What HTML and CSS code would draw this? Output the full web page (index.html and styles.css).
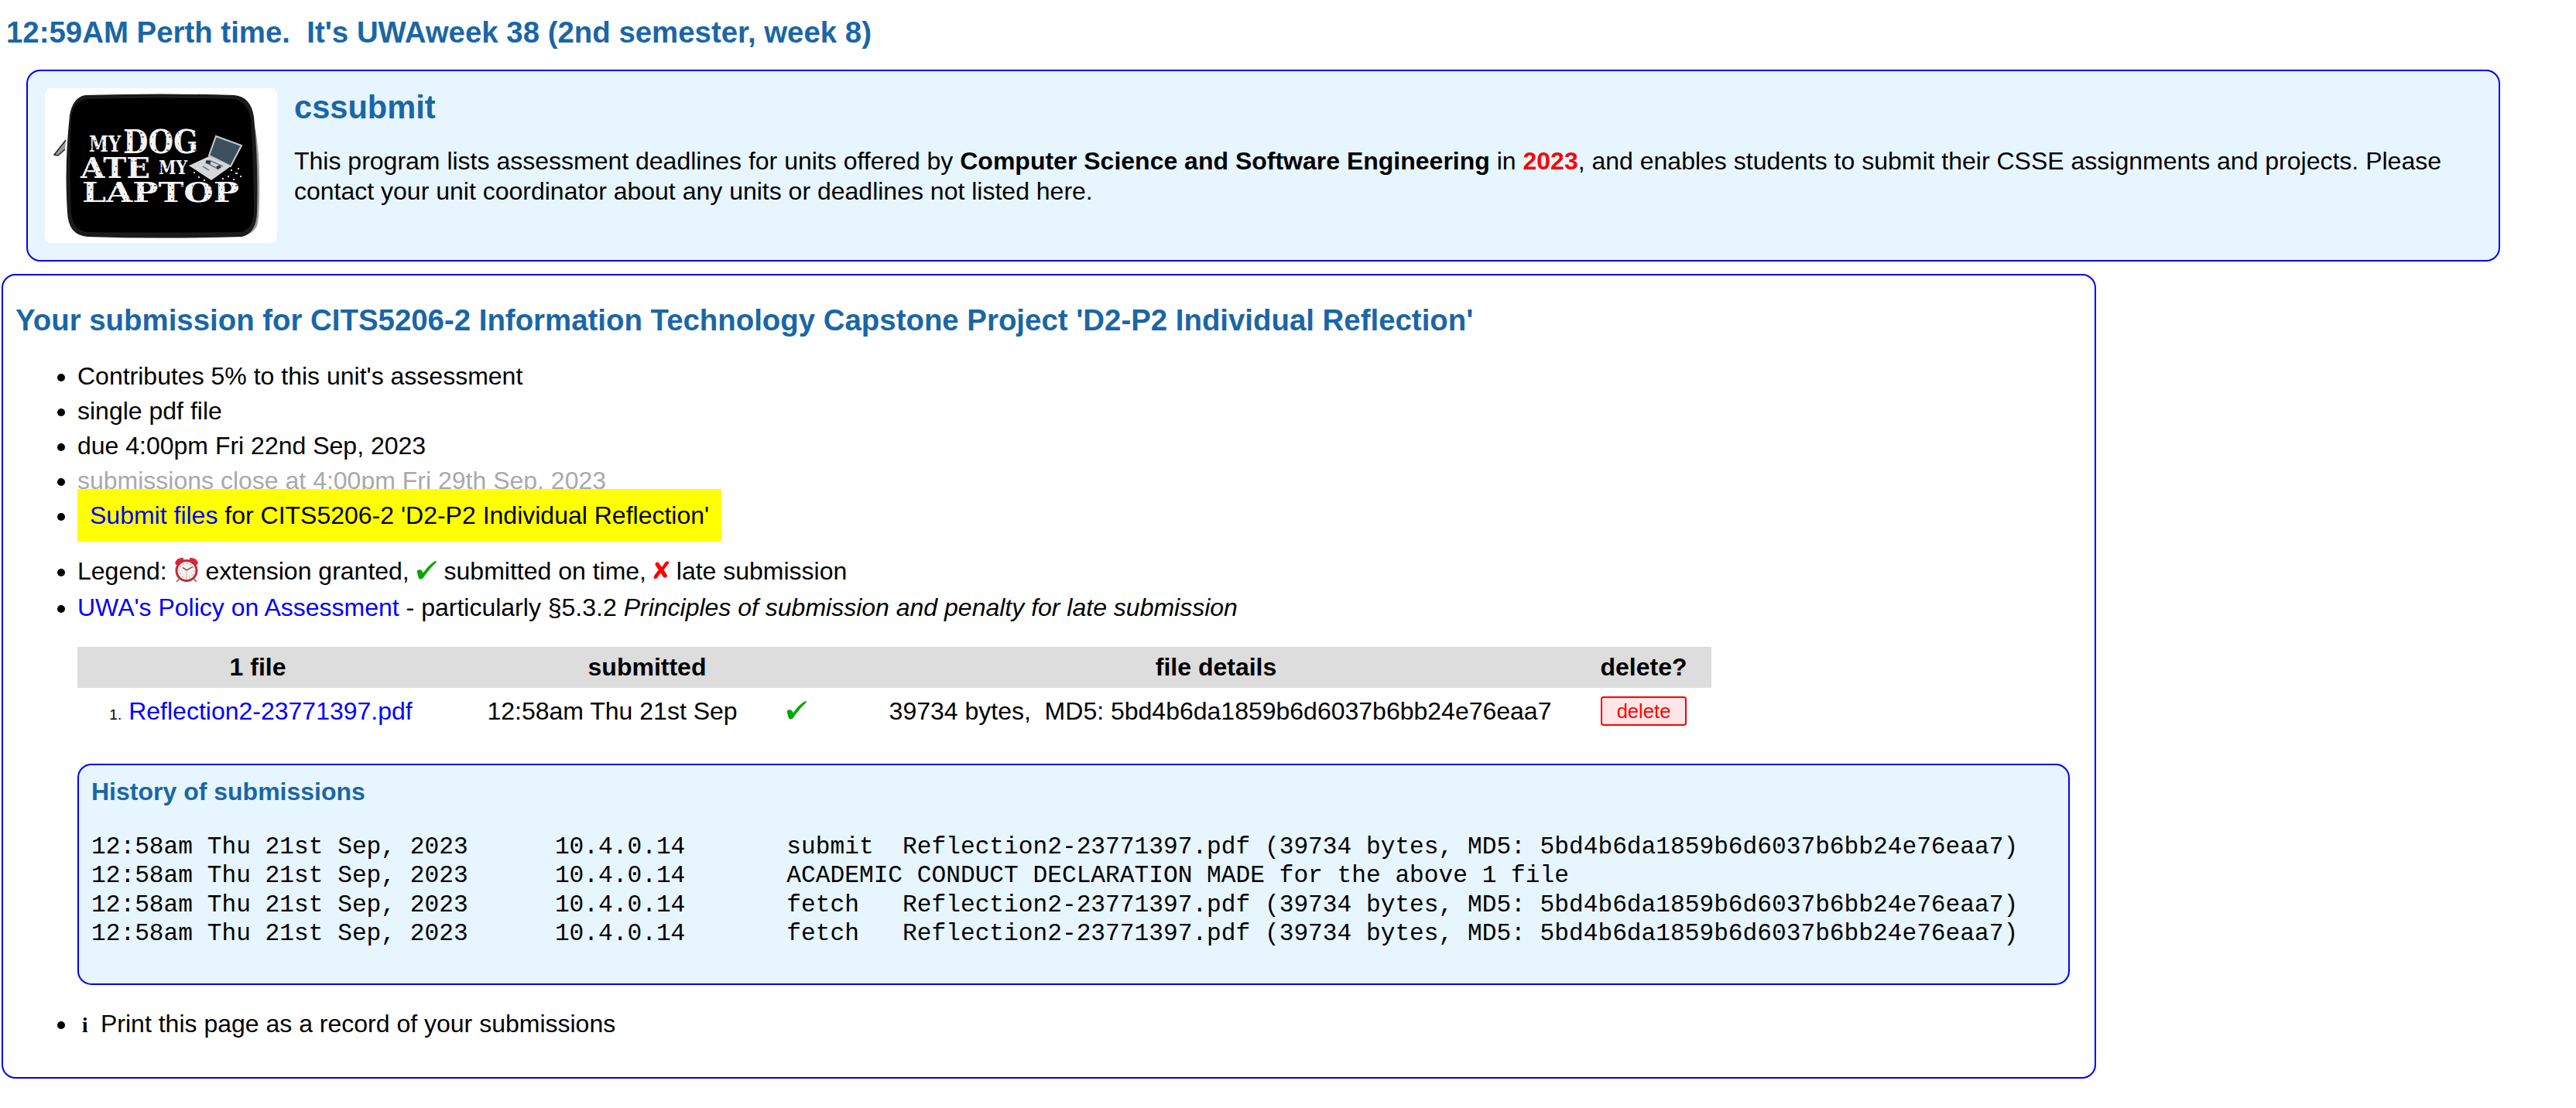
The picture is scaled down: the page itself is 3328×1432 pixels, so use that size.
FILE: index.html
```html
<!DOCTYPE html>
<html lang="en">
<head>
<meta charset="utf-8">
<title>cssubmit</title>
<link rel="stylesheet" href="styles.css">
</head>
<body>
<svg class="defs" width="0" height="0" aria-hidden="true">
  <symbol id="tick" viewBox="0 0 27 24"><path d="M0.5 13.5 C1.5 11 5 10.5 7 12.5 C8 13.6 8.3 14.6 8.8 15.6 C13 9.5 18.5 3.5 23.5 0.6 Q26 -0.2 26 1.6 C20 7 13 15.5 9 21.5 C7.5 23.8 4 24 3 22.2 C2.2 20 1.5 16.5 0.5 13.5Z" fill="#00a800"/></symbol>
</svg>
<h2 class="clock-line">12:59AM Perth time.&nbsp; It's UWAweek 38 (2nd semester, week 8)</h2>

<header class="banner">
  <svg class="logo" viewBox="0 0 300 200" role="img" aria-label="My dog ate my laptop">
    <rect width="300" height="200" rx="8" fill="#fff"/>
    <path d="M27 67 L12 86 L17 87 L26 79" fill="#999" stroke="#222" stroke-width="1.5"/>
    <path d="M266 30 Q276 60 277 110 Q278 165 274 178 Q268 190 250 192Z" fill="#999"/>
    <path d="M52 9 Q150 6 245 9 Q266 11 270 37 Q276 100 274 160 Q273 188 254 192 Q150 195 55 192 Q30 190 29 160 Q25 100 32 35 Q36 12 52 9Z" fill="#1b1b1b"/>
    <path d="M54 14 Q150 11 244 14 Q261 16 266 40 Q270 100 270 160 Q268 184 252 186 Q150 187 57 186 Q36 185 34 160 Q31 100 34 38 Q37 17 54 14Z" fill="#000"/>
    <g class="logo-text">
      <text x="57" y="82" font-size="27" textLength="41" lengthAdjust="spacingAndGlyphs">MY</text>
      <text x="101" y="84" font-size="43" textLength="97" lengthAdjust="spacingAndGlyphs">DOG</text>
      <text x="46" y="116" font-size="37" textLength="90" lengthAdjust="spacingAndGlyphs">ATE</text>
      <text x="147" y="111" font-size="24" textLength="37" lengthAdjust="spacingAndGlyphs">MY</text>
      <text x="48" y="147" font-size="36" textLength="203" lengthAdjust="spacingAndGlyphs">LAPTOP</text>
    </g>
    <g fill="none" stroke="#000" stroke-width="1" stroke-dasharray="1 5 2 9 1 3 3 11">
      <path d="M58 68H98M60 76H98M102 58H198M104 63H196M102 72H198M101 80H198M60 94H136M50 101H134M48 108H136M150 103H184M50 126H250M53 131H249M50 137H250M52 143H246"/>
    </g>
    <path d="M221 62 L254 74 L240 101 L212 87Z" fill="#3e5060" stroke="#ccc" stroke-width="2"/>
    <path d="M212 88 L240 101 L215 119 L186 100Z" fill="#d5d7da"/>
    <path d="M212 93 L230 101 M208 96 L225 105 M204 101 L212 106" stroke="#777" stroke-width="1.5"/>
    <path d="M222 103 l5 -2 M208 95 l6 1" stroke="#24384a" stroke-width="4"/>
    <path d="M240 106h2M246 110h3M236 114h2M243 118h2M249 104h2M229 117h2M252 114h2M192 109h2M198 115h2M205 119h2" stroke="#ddd" stroke-width="2"/>
  </svg>
  <div class="intro">
    <h1 class="app-name">cssubmit</h1>
    <p class="blurb">This program lists assessment deadlines for units offered by <b>Computer Science and Software Engineering</b> in <b class="year">2023</b>, and enables students to submit their CSSE assignments and projects. Please contact your unit coordinator about any units or deadlines not listed here.</p>
  </div>
</header>

<main class="panel">
  <h2 class="panel-title">Your submission for CITS5206-2 Information Technology Capstone Project 'D2-P2 Individual Reflection'</h2>
  <ul class="facts">
    <li>Contributes 5% to this unit's assessment</li>
    <li>single pdf file</li>
    <li>due 4:00pm Fri 22nd Sep, 2023</li>
    <li><span class="closed">submissions close at 4:00pm Fri 29th Sep, 2023</span></li>
    <li><span class="submit"><a href="#">Submit files</a> for CITS5206-2 'D2-P2 Individual Reflection'</span></li>
  </ul>
  <ul class="notes">
    <li>Legend: <svg class="alarm" viewBox="0 0 32 34"><path d="M7 28 L3 32 M25 28 L29 32" stroke="#888" stroke-width="2"/><path d="M1 8 Q3 0 12 1 L12 5 L4 11Z M31 8 Q29 0 20 1 L20 5 L28 11Z" fill="#e02436"/><circle cx="16" cy="17.5" r="13" fill="#f6f2ee" stroke="#c22a38" stroke-width="3"/><path d="M11 13.5 L16 17 L24 12.5" fill="none" stroke="#444" stroke-width="1.4"/><path d="M16 17V27" stroke="#d9b98a" stroke-width="1"/><circle cx="16" cy="17.5" r="9.5" fill="none" stroke="#e08a8a" stroke-width="2" stroke-dasharray="1 3.97"/></svg> extension granted, <svg class="tick"><use href="#tick"/></svg> submitted on time, <svg class="cross" viewBox="0 0 21 24"><path d="M4 2 Q5 0.5 7 2.5 L11 8 L15.5 1.5 Q18 -0.5 20.5 1.5 Q20.5 3 18.5 5 L13.5 11.5 L18 18.5 Q18.5 20.5 16 21.5 Q14 22.5 12.5 20 L9.5 15.5 L5 22 Q3 24 0.8 22.5 Q0 21 1.5 18.5 L6.8 11.5 L2.5 5 Q2 3 4 2Z" fill="#f00"/></svg> late submission</li>
    <li><a href="#">UWA's Policy on Assessment</a> - particularly §5.3.2 <i>Principles of submission and penalty for late submission</i></li>
  </ul>
  <table class="files">
    <colgroup><col class="c-file"><col class="c-when"><col class="c-mark"><col class="c-detail"><col class="c-delete"></colgroup>
    <tr><th>1 file</th><th colspan="2">submitted</th><th>file details</th><th>delete?</th></tr>
    <tr><td class="file"><small>1.</small> <a href="#">Reflection2-23771397.pdf</a></td><td>12:58am Thu 21st Sep</td><td class="mark"><svg class="tick"><use href="#tick"/></svg></td><td class="detail">39734 bytes,&nbsp; MD5: 5bd4b6da1859b6d6037b6bb24e76eaa7</td><td><button class="delete">delete</button></td></tr>
  </table>
  <section class="history">
    <h3 class="history-title">History of submissions</h3>
<pre class="log">12:58am Thu 21st Sep, 2023      10.4.0.14       submit  Reflection2-23771397.pdf (39734 bytes, MD5: 5bd4b6da1859b6d6037b6bb24e76eaa7)
12:58am Thu 21st Sep, 2023      10.4.0.14       ACADEMIC CONDUCT DECLARATION MADE for the above 1 file
12:58am Thu 21st Sep, 2023      10.4.0.14       fetch   Reflection2-23771397.pdf (39734 bytes, MD5: 5bd4b6da1859b6d6037b6bb24e76eaa7)
12:58am Thu 21st Sep, 2023      10.4.0.14       fetch   Reflection2-23771397.pdf (39734 bytes, MD5: 5bd4b6da1859b6d6037b6bb24e76eaa7)</pre>
  </section>
  <ul class="print">
    <li><span class="info">i</span>Print this page as a record of your submissions</li>
  </ul>
</main>
</body>
</html>
```

FILE: styles.css
```css
* { box-sizing: border-box; }
body {
  margin: 0;
  background: #fff;
  color: #000;
  font: 32px/39px "Liberation Sans", Arial, sans-serif;
}
h1, h2, h3, p, ul, pre { margin: 0; padding: 0; }
h1, h2, h3 { color: #1a66a6; font-weight: bold; }
a { color: #00f; text-decoration: none; }
.defs { display: block; height: 0; }

.clock-line { font-size: 38.4px; line-height: 44px; padding: 20px 0 26px 8px; }

.banner {
  display: flex;
  gap: 22px;
  width: 3196px;
  height: 248px;
  margin-left: 34px;
  padding: 22px;
  border: 2px solid #00f;
  border-radius: 18px;
  background: #e6f5fe;
}
.logo { width: 300px; height: 200px; flex: none; }
.logo-text { fill: #f4f4f4; font-family: "DejaVu Serif", serif; font-weight: bold; }
.app-name { font-size: 41.6px; line-height: 50px; }
.blurb { width: 2800px; padding-top: 25px; }
.year { color: #f00; }

.panel {
  width: 2706px;
  height: 1040px;
  margin: 16px 0 0 2px;
  padding: 0 32px 0 96px;
  border: 2px solid #00f;
  border-radius: 18px;
}
.panel-title { margin-left: -80px; padding-top: 36px; font-size: 38.4px; line-height: 44px; white-space: nowrap; }
.facts { padding-top: 28px; line-height: 45px; }
.closed { color: #a9a9a9; }
.submit { padding: 16px; background: #ff0; }
.notes { padding-top: 26px; line-height: 47px; }
.alarm { width: 32px; height: 34px; vertical-align: -5px; }
.tick { width: 27px; height: 24px; vertical-align: 0; }
.cross { width: 21px; height: 24px; vertical-align: 0; }

.files { width: 2111px; margin-top: 27px; border-collapse: collapse; table-layout: fixed; }
.files th, .files td { padding: 0; text-align: center; white-space: nowrap; }
.files th { height: 53px; background: #ddd; line-height: 53px; }
.files td { height: 62px; line-height: 60px; vertical-align: top; }
.files .file { padding-left: 8px; }
.files .mark { text-align: left; }
.files .detail { padding-left: 11px; }
.c-file { width: 466px; }
.c-when { width: 450px; }
.c-mark { width: 90px; }
.c-detail { width: 930px; }
.c-delete { width: 175px; }
.files small { font-size: 19.2px; line-height: 1; }
.delete {
  width: 111px;
  height: 38px;
  padding: 0;
  border: 2px solid #f00;
  border-radius: 4px;
  background: #ffe6e6;
  color: #f00;
  font: 25.6px/34px "Liberation Sans", Arial, sans-serif;
  vertical-align: 2px;
}

.history {
  width: 2574px;
  height: 286px;
  margin-top: 36px;
  padding: 16px;
  border: 2px solid #00f;
  border-radius: 18px;
  background: #e6f5fe;
}
.history-title { font-size: 32px; line-height: 37px; }
.log { padding-top: 34px; font: 31.2px/37.33px "Liberation Mono", monospace; }
.print { padding-top: 31px; }
.info { display: inline-block; width: 30px; padding-left: 6px; font: bold 27px/30px "Liberation Serif", serif; }
```
